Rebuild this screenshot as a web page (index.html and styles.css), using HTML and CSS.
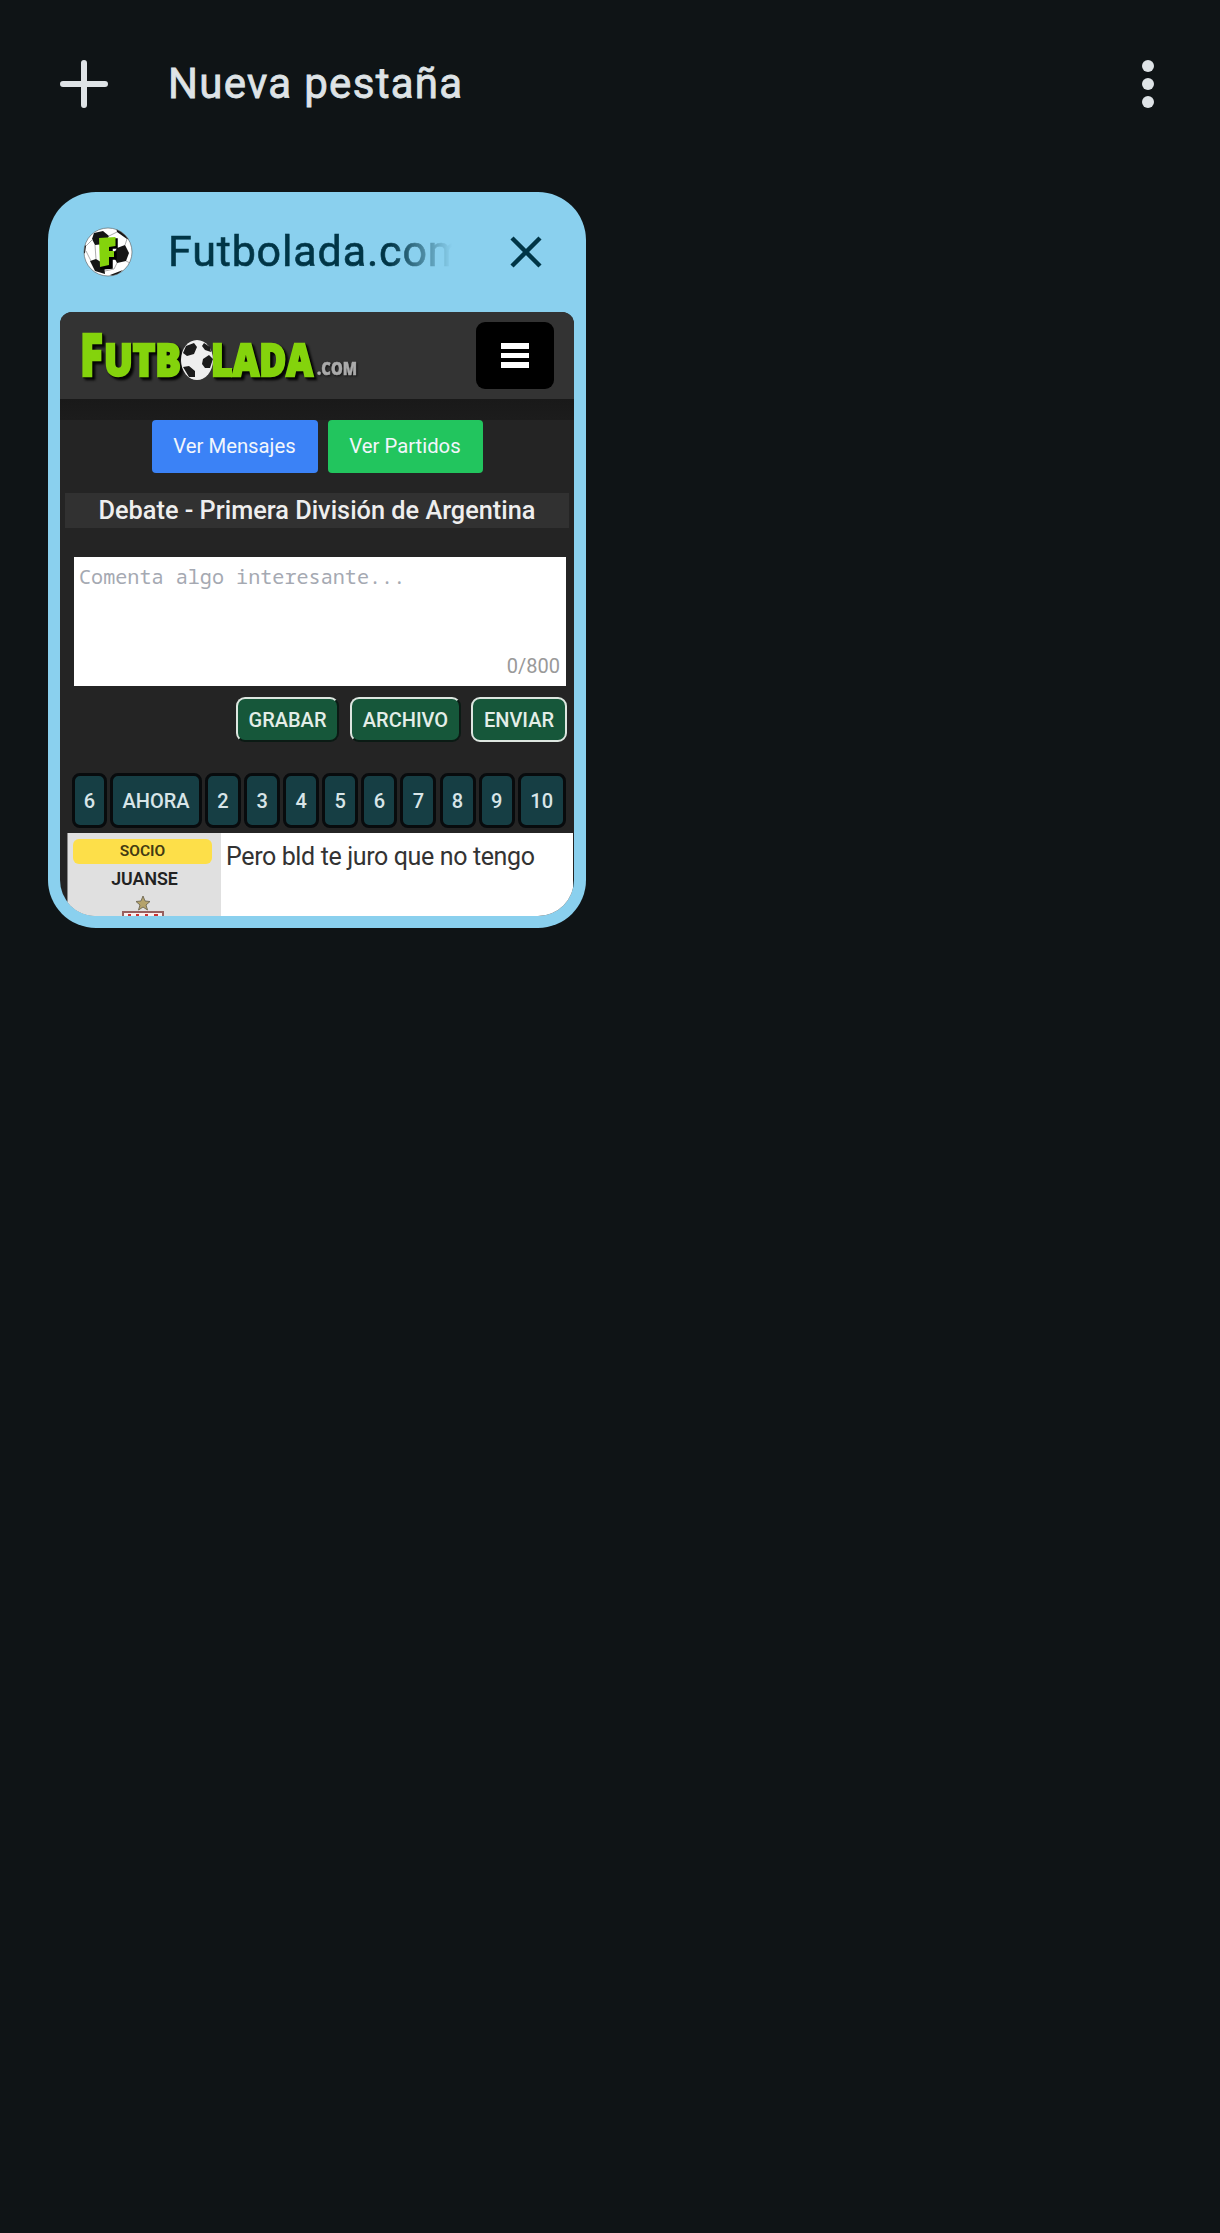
FILE: index.html
```html
<!DOCTYPE html>
<html lang="es">
<head>
<meta charset="utf-8">
<title>Pestañas</title>
<link rel="stylesheet" href="styles.css">
</head>
<body>
<header class="toolbar">
  <svg class="plus" viewBox="0 0 48 48"><path d="M24 3v42M3 24h42" stroke="currentColor" stroke-width="6" stroke-linecap="round"/></svg>
  <span class="new-tab">Nueva pestaña</span>
  <svg class="more" viewBox="0 0 12 48" fill="currentColor"><circle cx="6" cy="6" r="6"/><circle cx="6" cy="24" r="6"/><circle cx="6" cy="42" r="6"/></svg>
</header>
<main class="grid">
  <article class="card">
    <div class="card-head">
      <svg class="favicon" viewBox="0 0 50 50">
        <clipPath id="ball"><circle cx="25" cy="25" r="24"/></clipPath>
        <circle cx="25" cy="25" r="24" fill="#fff"/>
        <g clip-path="url(#ball)" fill="#151515">
          <path d="M11 6 20 4 26 9 21 17 12 18 9 12Z"/>
          <path d="M33 0 49 13 44 12 34 5Z"/>
          <path d="M34 21 42 18 46 26 43 34 34 36 30 28Z"/>
          <path d="M7 34 13 32 21 37 22 47 12 44Z"/>
          <path d="M0 16 3 19 2 26 0 27Z"/>
          <path d="M27 48 40 43 32 50Z"/>
          <path d="M26 9 34 5M42 18 44 12M43 34 47 36M3 24 8 34M22 44 31 42 34 36M3 19 10 12M12 18 13 32" fill="none" stroke="#888" stroke-width=".7"/>
        </g>
        <circle cx="25" cy="25" r="24" fill="none" stroke="#555" stroke-width=".6"/>
        <path d="M18 12H34V21H29V25H33V32H29V41L18 42Z" fill="#000" stroke="#000" stroke-width="1.500"/>
        <path d="M16 11 32.500 10V19L26 20V24H31V30H26V38L17 40Z" fill="#84d30c"/>
      </svg>
      <span class="card-title">Futbolada.com</span>
      <svg class="close" viewBox="0 0 32 32"><path d="M2 2 30 30M30 2 2 30" stroke="currentColor" stroke-width="4.4"/></svg>
    </div>
    <div class="page">
      <div class="site-head">
        <svg class="logo" viewBox="0 0 290 87">
          <g class="logo-text">
            <text x="20" y="63.500" font-size="59" textLength="23" lengthAdjust="spacingAndGlyphs">F</text>
            <text x="44" y="63.500" font-size="45" textLength="77" lengthAdjust="spacingAndGlyphs">UTB</text>
            <text x="151" y="63.500" font-size="45" textLength="102" lengthAdjust="spacingAndGlyphs">LADA</text>
          </g>
          <text class="logo-com" x="257" y="63" font-size="18" textLength="40" lengthAdjust="spacingAndGlyphs">.COM</text>
          <ellipse cx="137" cy="48" rx="16" ry="20" fill="#eee"/>
          <path d="M126 34 134 31 137 35 134 42 127 44 123 41ZM144 31 150 35 151 40 145 38 142 34ZM143 47 149 43 153 47 150 56 145 56 142 52ZM123 55 129 54 135 59 135 65 129 65Z" fill="#1b1b1b"/>
        </svg>
        <div class="menu"><i></i><i></i><i></i></div>
      </div>
      <div class="texture"></div>
      <div class="links"><span class="btn blue">Ver Mensajes</span><span class="btn green">Ver Partidos</span></div>
      <h1 class="heading">Debate - Primera División de Argentina</h1>
      <div class="comment"><span class="placeholder">Comenta algo interesante...</span><span class="count">0/800</span></div>
      <div class="actions"><span class="act a1">GRABAR</span><span class="act a2">ARCHIVO</span><span class="act a3">ENVIAR</span></div>
      <nav class="pager"><b>6</b><b>AHORA</b><b>2</b><b>3</b><b>4</b><b>5</b><b>6</b><b>7</b><b>8</b><b>9</b><b>10</b></nav>
      <div class="post">
        <div class="author">
          <span class="badge">SOCIO</span>
          <span class="name">JUANSE</span>
          <svg class="crest" viewBox="0 0 44 24"><path d="M22 3 24 8 29 8.500 25 12 26.500 17 22 14 17.500 17 19 12 15 8.500 20 8Z" fill="#b5a36b" stroke="#77705a"/><path d="M2 19H42V26H2Z" fill="#fbeeee" stroke="#98605f" stroke-width="2"/><path d="M7 22h3M15 22h3M24 22h3M33 22h4" stroke="#c33" stroke-width="2"/></svg>
        </div>
        <p class="message">Pero bld te juro que no tengo</p>
      </div>
    </div>
  </article>
</main>
</body>
</html>
```
FILE: styles.css
```css
* { box-sizing: border-box; }
body { margin: 0; min-height: 2233px; background: #0f1416; font-family: Roboto, sans-serif; }
.toolbar { display: flex; align-items: center; height: 168px; padding: 0 66px 0 60px; color: #dee3e6; }
.plus { width: 48px; height: 48px; fill: none; }
.new-tab { margin: -2px 0 0 60px; font-size: 42px; font-weight: 400; letter-spacing: 1.300px; -webkit-text-stroke: 0.800px; }
.more { width: 12px; height: 48px; margin-left: auto; }
.grid { padding: 24px 48px; }
.card { width: 538px; height: 736px; padding: 0 12px 12px; border-radius: 48px; background: #8ad0ee; }
.card-head { display: flex; align-items: center; height: 120px; padding: 0 32px 0 23px; color: #003546; }
.favicon { width: 50px; height: 50px; flex: none; }
.card-title { width: 284px; margin: -2px 0 0 35px; overflow: hidden; white-space: nowrap; font-size: 43px; letter-spacing: 0.850px; -webkit-text-stroke: 0.6px; -webkit-mask-image: linear-gradient(to right, #000 78%, transparent); mask-image: linear-gradient(to right, #000 78%, transparent); }
.close { width: 32px; height: 32px; margin-left: auto; fill: none; }
.page { height: 604px; overflow: hidden; border-radius: 12px 12px 36px 36px; background: #242424; }
.site-head { display: flex; justify-content: space-between; height: 87px; padding-right: 20px; background: #333; }
.logo { width: 290px; height: 87px; overflow: visible; }
.logo-text { font-family: "Open Sans", sans-serif; font-weight: 800; fill: #84d30c; stroke: #84d30c; stroke-width: 2.400px; filter: drop-shadow(1px 1px 0 #050505) drop-shadow(2px 2px 1px #050505); }
.logo-com { font-family: "Open Sans", sans-serif; font-weight: 800; fill: #aaa; stroke: #aaa; stroke-width: 0.500px; filter: drop-shadow(1px 1px 1px #111); }
.menu { display: flex; flex-direction: column; align-items: center; justify-content: center; gap: 4px; width: 78px; height: 67px; margin-top: 10px; border-radius: 9px; background: #000; }
.menu i { width: 28px; height: 5.500px; background: #fff; }
.texture { height: 20.500px; background: linear-gradient(#191919, #1c1c1c); }
.links { display: flex; justify-content: center; gap: 10px; height: 53px; }
.btn { display: flex; align-items: center; justify-content: center; border-radius: 4px; color: #f2f6fc; font-size: 20.300px; }
.blue { width: 166px; background: #3b82f6; }
.green { width: 155px; background: #22c55e; }
.heading { margin: 20.500px 5px 0; height: 35px; line-height: 35px; background: #313131; color: #eee; font-size: 25.300px; font-weight: 500; text-align: center; white-space: nowrap; }
.comment { display: flex; flex-direction: column; justify-content: space-between; height: 129px; margin: 29px 8px 0 14px; padding: 5px 6px 5px 5px; background: #fff; }
.placeholder { color: #a5a9b2; font: 20.150px/28px "Noto Sans Mono", "DejaVu Sans Mono", monospace; }
.count { align-self: flex-end; color: #999; font-size: 20px; line-height: 30px; }
.actions { display: flex; justify-content: flex-end; height: 45px; margin: 11px 7px 0 0; }
.act { display: flex; align-items: center; justify-content: center; border: 2.500px solid; border-color: #dde6e0 #0b1a14 #0b1a14 #dde6e0; border-radius: 9px; background: #16573a; color: #e4eee8; font-size: 20px; font-weight: 500; }
.a1 { width: 103px; margin-right: 11px; }
.a2 { width: 111px; margin-right: 10px; }
.a3 { width: 96px; border-color: #dde6e0; }
.pager { display: grid; grid-template-columns: 35px 91.800px repeat(8, 36px) 48px; column-gap: 3.100px; height: 55px; margin: 31px 8px 0 12px; }
.pager b { display: flex; align-items: center; justify-content: center; border: 3px solid #080b0d; border-radius: 8px; background: #163e44; color: #d8e5e8; font-size: 20px; font-weight: 500; }
.post { display: flex; height: 83px; margin: 5px 1px 0 7px; background: #fff; }
.author { display: flex; flex-direction: column; align-items: center; width: 154px; padding: 6px 9px 0 5px; background: #e0e0e0; border-left: 1px solid #888; }
.badge { width: 139px; height: 25px; border-radius: 6px; background: #fddf49; color: #433a12; font-size: 15.500px; font-weight: 600; line-height: 25px; text-align: center; }
.name { height: 29px; padding-left: 4px; color: #222; font-size: 17.800px; font-weight: 600; line-height: 30px; }
.crest { width: 44px; height: 24px; flex: none; }
.message { margin: 6px 0 0 5px; color: #333; font-size: 25px; line-height: 36px; letter-spacing: -0.370px; white-space: nowrap; }
```
